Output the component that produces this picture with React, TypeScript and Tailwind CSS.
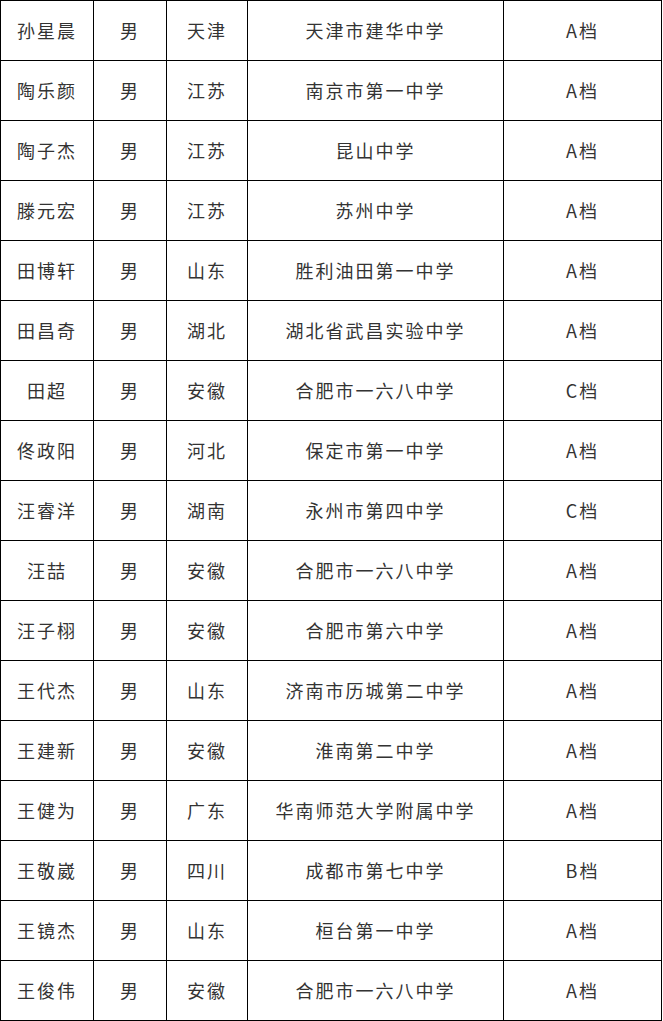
const rows: [string, string, string, string, string][] = [
  ["孙星晨", "男", "天津", "天津市建华中学", "A档"],
  ["陶乐颜", "男", "江苏", "南京市第一中学", "A档"],
  ["陶子杰", "男", "江苏", "昆山中学", "A档"],
  ["滕元宏", "男", "江苏", "苏州中学", "A档"],
  ["田博轩", "男", "山东", "胜利油田第一中学", "A档"],
  ["田昌奇", "男", "湖北", "湖北省武昌实验中学", "A档"],
  ["田超", "男", "安徽", "合肥市一六八中学", "C档"],
  ["佟政阳", "男", "河北", "保定市第一中学", "A档"],
  ["汪睿洋", "男", "湖南", "永州市第四中学", "C档"],
  ["汪喆", "男", "安徽", "合肥市一六八中学", "A档"],
  ["汪子栩", "男", "安徽", "合肥市第六中学", "A档"],
  ["王代杰", "男", "山东", "济南市历城第二中学", "A档"],
  ["王建新", "男", "安徽", "淮南第二中学", "A档"],
  ["王健为", "男", "广东", "华南师范大学附属中学", "A档"],
  ["王敬崴", "男", "四川", "成都市第七中学", "B档"],
  ["王镜杰", "男", "山东", "桓台第一中学", "A档"],
  ["王俊伟", "男", "安徽", "合肥市一六八中学", "A档"],
];

export default function App() {
  return (
    <div className="bg-white w-[663px] h-[1021px]">
      <div
        className="grid w-[662px] grid-cols-[93px_73px_81px_256px_158px] border-r border-b border-black text-[18px] text-[#333333]"
        style={{ fontFamily: '"Noto Sans CJK SC", "Noto Sans", sans-serif' }}
      >
        {rows.map((r, i) =>
          r.map((c, j) => (
            <div
              key={`${i}-${j}`}
              className="h-[60px] border-l border-t border-black flex items-center justify-center pt-[0px] tracking-[2px]"
            >
              {c}
            </div>
          ))
        )}
      </div>
    </div>
  );
}
